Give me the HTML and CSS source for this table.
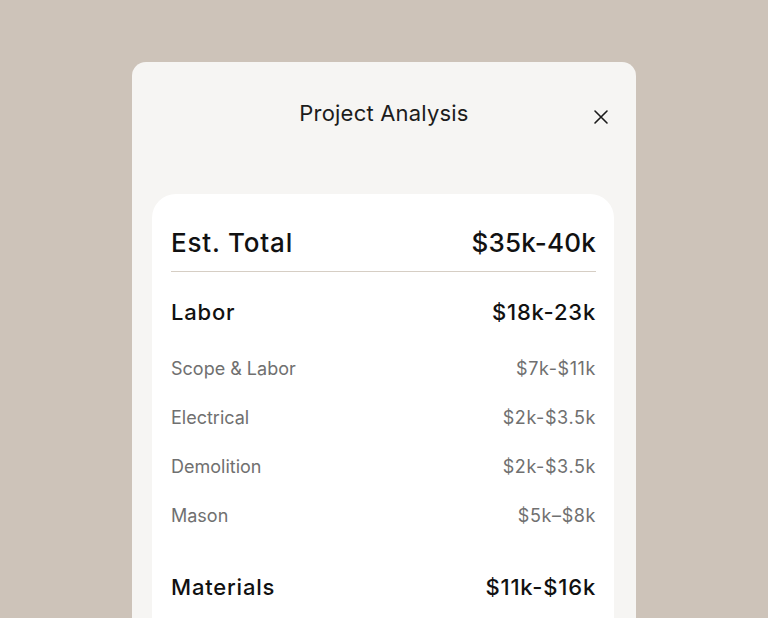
FILE: index.html
```html
<!DOCTYPE html>
<html lang="en">

<head>
  <meta charset="UTF-8">
  <meta name="viewport" content="width=device-width, initial-scale=1.0">
  <title>Project Analysis</title>
  <link rel="stylesheet" href="styles.css">
</head>

<body>
  <div class="modal">
    <div class="modal-header">
      <div class="title">Project Analysis</div>
      <div class="close">
        <svg width="16" height="16" viewBox="0 0 16 16">
          <path d="M2 2L14 14M14 2L2 14" stroke="#1a1a1a" stroke-width="1.6" stroke-linecap="round" />
        </svg>
      </div>
    </div>
    <div class="card">
      <div class="row total">
        <span class="label">Est. Total</span>
        <span class="amount">$35k-40k</span>
      </div>
      <div class="divider"></div>
      <div class="row group">
        <span>Labor</span>
        <span class="amount">$18k-23k</span>
      </div>
      <div class="row item">
        <span>Scope &amp; Labor</span>
        <span class="amount">$7k-$11k</span>
      </div>
      <div class="row item">
        <span>Electrical</span>
        <span class="amount">$2k-$3.5k</span>
      </div>
      <div class="row item">
        <span>Demolition</span>
        <span class="amount">$2k-$3.5k</span>
      </div>
      <div class="row item">
        <span>Mason</span>
        <span class="amount">$5k–$8k</span>
      </div>
      <div class="row group materials">
        <span>Materials</span>
        <span class="amount">$11k-$16k</span>
      </div>
    </div>
  </div>
</body>
</html>
```

FILE: styles.css
```css
body {
  margin: 0;
  background-color: #cdc3b9;
  font-family: Inter, "Noto Sans", sans-serif;
  color: #111;
  height: 618px;
  overflow: hidden;
}
.modal {
  width: 504px;
  height: 556px;
  margin: 62px auto 0;
  background-color: #f6f5f3;
  border-radius: 14px 14px 0 0;
}
.modal-header {
  position: relative;
  height: 132px;
}
.title {
  text-align: center;
  padding-top: 38px;
  font-size: 22px;
  color: #1c1c1c;
  letter-spacing: 0.2px;
}
.close {
  position: absolute;
  right: 27px;
  top: 47px;
  width: 16px;
  height: 16px;
}
.card {
  margin: 0 22px 0 20px;
  background-color: #fff;
  border-radius: 24px 24px 0 0;
  padding: 26px 18px 0 19px;
  height: 398px;
}
.row {
  display: flex;
  justify-content: space-between;
  align-items: center;
}
.total {
  font-size: 26px;
  font-weight: 500;
  height: 44px;
}
.total .label {
  letter-spacing: 0.8px;
}
.total .amount {
  letter-spacing: 0.2px;
}
.divider {
  height: 1px;
  background-color: #d6cec4;
  margin-top: 7px;
}
.group {
  font-size: 22px;
  font-weight: 500;
  letter-spacing: 0.8px;
  height: 30px;
  margin-top: 25px;
}
.item {
  font-size: 18px;
  color: #707070;
  height: 26px;
  margin-top: 23px;
}
.item .amount {
  letter-spacing: 0.6px;
}
.group + .item {
  margin-top: 28px;
}
.materials {
  margin-top: 44px;
}
```
